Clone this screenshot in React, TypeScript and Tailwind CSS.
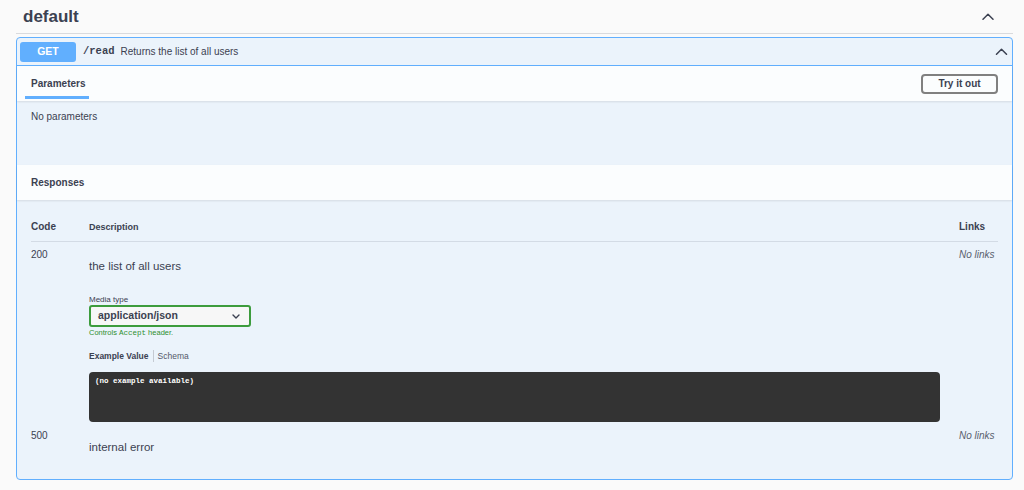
import React from "react";

function Chevron({ w, h, className }: { w: number; h: number; className?: string }) {
  return (
    <svg width={w} height={h} viewBox="0 0 12 7" className={className} fill="none">
      <path d="M1 6.2L6 1.2L11 6.2" stroke="#3b4151" strokeWidth="1.5" strokeLinecap="round" strokeLinejoin="round" />
    </svg>
  );
}

export default function App() {
  const mono = "font-['Liberation_Mono','DejaVu_Sans_Mono',monospace]";
  return (
    <div className="w-[1024px] h-[490px] overflow-hidden bg-[#fafafa] font-['Liberation_Sans',Arial,sans-serif] text-[#3b4151]">
      <div className="pl-4 pr-[11px]">
        <div className="flex h-[34px] items-center justify-between border-b border-[#d9dadd] pl-[7px] pr-[19px]">
          <h3 className="text-[17px] font-bold leading-none">default</h3>
          <Chevron w={12} h={7} />
        </div>
        <div className="mt-[3px] rounded-[4px] border border-[#61affe] bg-[#ebf3fb]">
          {/* summary */}
          <div className="flex h-[28px] items-center border-b border-[#61affe] pl-[3px] pr-[4px]">
            <div className="flex h-[20px] w-[56px] items-center justify-center rounded-[3px] bg-[#61affe] text-[10.5px] font-bold text-white">
              GET
            </div>
            <span className={`${mono} ml-[7px] text-[10.5px] font-bold`}>/read</span>
            <span className="ml-[6px] text-[10px]">Returns the list of all users</span>
            <Chevron w={13} h={7} className="ml-auto" />
          </div>
          {/* tabs */}
          <div className="flex h-[35px] items-center justify-between bg-white/80 pl-[8px] pr-[14px] shadow-[0_1px_2px_rgba(0,0,0,0.1)]">
            <div className="relative flex h-full items-center px-[6px]">
              <span className="text-[10px] font-bold">Parameters</span>
              <div className="absolute bottom-[2px] left-0 h-[3px] w-[64px] bg-[#61affe]" />
            </div>
            <button className="flex h-[20px] w-[77px] items-center justify-center rounded-[4px] border-2 border-[#808080] text-[10px] font-bold text-[#3b4151]">
              Try it out
            </button>
          </div>
          <div className="h-[64px] px-[14px] pt-[10px]">
            <p className="text-[10px] leading-[12px]">No parameters</p>
          </div>
          <div className="flex h-[35px] items-center bg-white/80 px-[14px] shadow-[0_1px_2px_rgba(0,0,0,0.1)]">
            <span className="text-[10px] font-bold">Responses</span>
          </div>
          {/* table */}
          <div className="px-[14px] pb-[25px] pt-[21px]">
            <div className="flex border-b border-[#d3dbe5] pb-[8px]">
              <div className="w-[58px] text-[10px] font-bold leading-[12px]">Code</div>
              <div className="flex-1 text-[9px] font-bold leading-[12px]">Description</div>
              <div className="w-[39px] text-[10px] font-bold leading-[12px]">Links</div>
            </div>
            {/* 200 */}
            <div className="flex pt-[7px]">
              <div className="w-[58px] text-[10px] leading-[12px]">200</div>
              <div className="flex-1 pr-[19px]">
                <p className="mt-[10px] text-[11.5px] leading-[14px]">the list of all users</p>
                <p className="mt-[22px] text-[8px] leading-[10px]">Media type</p>
                <div className="flex h-[22px] w-[162px] items-center justify-between rounded-[3px] border-2 border-[#3d9c3d] bg-[#f7f7f7] pl-[7px] pr-[9px]">
                  <span className="text-[10.5px] font-bold">application/json</span>
                  <svg width="8" height="5" viewBox="0 0 8 5" fill="none">
                    <path d="M1 1L4 4L7 1" stroke="#3b4151" strokeWidth="1.4" strokeLinecap="round" strokeLinejoin="round" />
                  </svg>
                </div>
                <p className="mt-[1px] text-[7.5px] leading-[10px] text-[#2f8f2f]">
                  Controls <span className={`${mono}`}>Accept</span> header.
                </p>
                <div className="mt-[12px] flex items-center text-[8.5px] leading-[12px]">
                  <span className="font-bold">Example Value</span>
                  <span className="mx-[4px] h-[12px] w-px bg-[#c5cad2]" />
                  <span className="text-[#54596a]">Schema</span>
                </div>
                <div className={`${mono} mt-[10px] h-[50px] rounded-[4px] bg-[#333333] pl-[6px] pt-[4px] text-[7.5px] font-bold leading-[10px] text-white`}>
                  (no example available)
                </div>
              </div>
              <div className="w-[39px] text-[10px] italic leading-[12px] text-[#5a5f6e]">No links</div>
            </div>
            {/* 500 */}
            <div className="flex pt-[8px]">
              <div className="w-[58px] text-[10px] leading-[12px]">500</div>
              <div className="flex-1 pr-[19px]">
                <p className="mt-[10px] text-[11.5px] leading-[14px]">internal error</p>
              </div>
              <div className="w-[39px] text-[10px] italic leading-[12px] text-[#5a5f6e]">No links</div>
            </div>
          </div>
        </div>
      </div>
    </div>
  );
}
